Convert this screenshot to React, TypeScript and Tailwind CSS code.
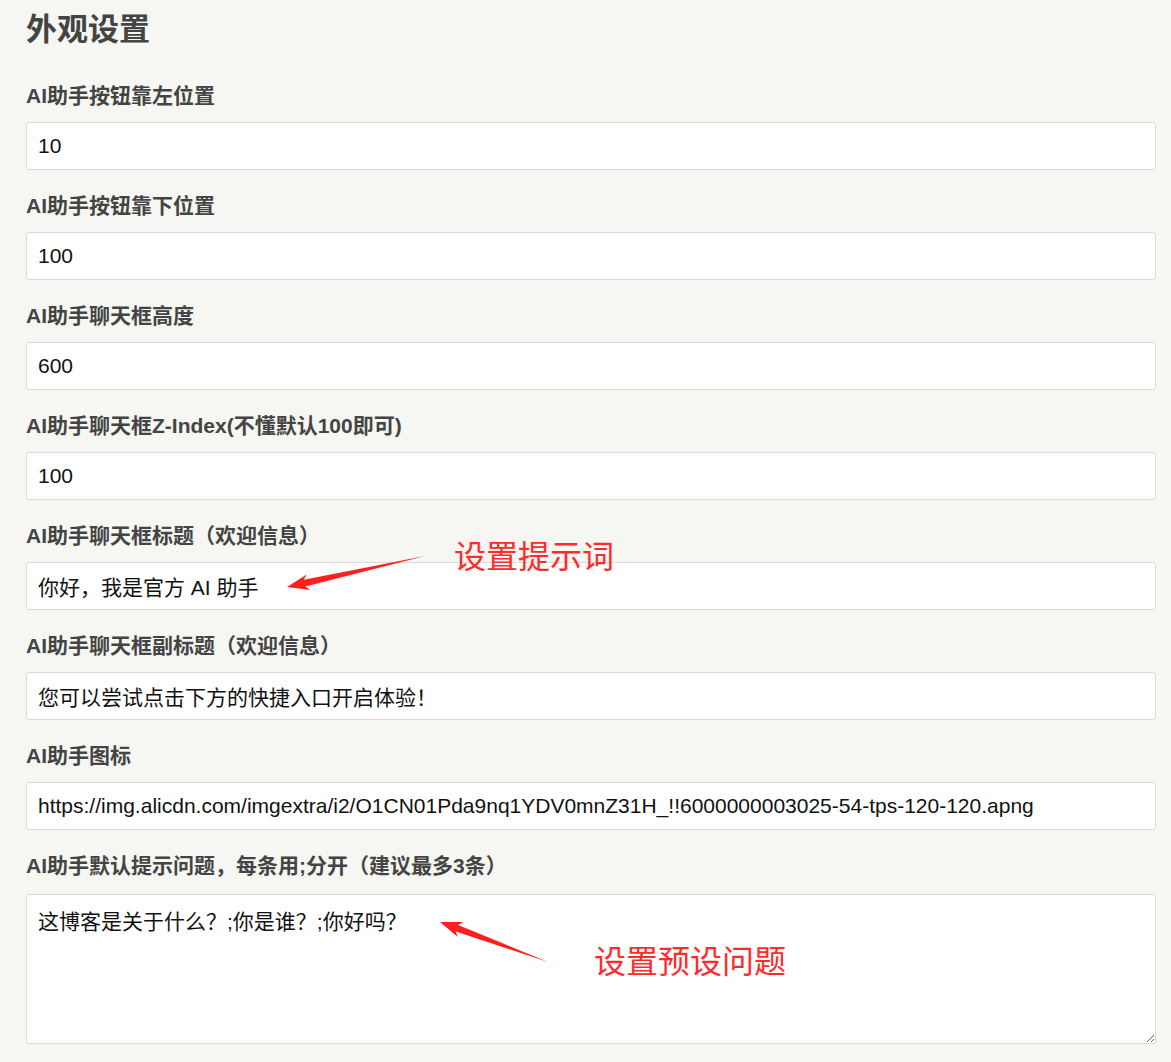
import React from 'react';

const font = { fontFamily: '"Liberation Sans", Arial, "Noto Sans CJK SC", sans-serif' };

const fields = [
  { label: 'AI助手按钮靠左位置', value: '10' },
  { label: 'AI助手按钮靠下位置', value: '100' },
  { label: 'AI助手聊天框高度', value: '600' },
  { label: 'AI助手聊天框Z-Index(不懂默认100即可)', value: '100' },
  { label: 'AI助手聊天框标题（欢迎信息）', value: '你好，我是官方 AI 助手' },
  { label: 'AI助手聊天框副标题（欢迎信息）', value: '您可以尝试点击下方的快捷入口开启体验！' },
  {
    label: 'AI助手图标',
    value: 'https://img.alicdn.com/imgextra/i2/O1CN01Pda9nq1YDV0mnZ31H_!!6000000003025-54-tps-120-120.apng',
  },
];

const Label: React.FC<{ children: React.ReactNode }> = ({ children }) => (
  <label className="block text-[21px] leading-[27px] font-bold text-[#444]">{children}</label>
);

export default function App() {
  return (
    <div className="relative min-h-screen bg-[#f6f6f2] px-[26px] pt-[10px] pb-[18px]" style={font}>
      <h2 className="text-[31px] leading-[40px] font-bold text-[#444]">外观设置</h2>

      <div className="mt-[32px] flex flex-col gap-[22px]">
        {fields.map((f) => (
          <div key={f.label}>
            <Label>{f.label}</Label>
            <input
              type="text"
              defaultValue={f.value}
              className="mt-[13px] block w-[1130px] h-[48px] px-[11px] bg-white border border-[#d9d9d5] rounded-[3px] text-[21px] text-[#111] outline-none"
            />
          </div>
        ))}
        <div>
          <Label>AI助手默认提示问题，每条用;分开（建议最多3条）</Label>
          <textarea
            defaultValue="这博客是关于什么？;你是谁？;你好吗？"
            className="mt-[15px] block w-[1130px] h-[150px] px-[11px] py-[12px] bg-white border border-[#d9d9d5] rounded-[3px] text-[21px] leading-[30px] text-[#111] outline-none"
          />
        </div>
      </div>

      {/* annotations */}
      <div
        className="absolute left-[454px] top-[533px] text-[32px] leading-[42px] text-[#ff2a2a]"
        style={{ fontFamily: '"Noto Sans CJK SC", sans-serif', fontWeight: 400 }}
      >
        设置提示词
      </div>
      <div
        className="absolute left-[594px] top-[938px] text-[32px] leading-[42px] text-[#ff2a2a]"
        style={{ fontFamily: '"Noto Sans CJK SC", sans-serif', fontWeight: 400 }}
      >
        设置预设问题
      </div>
      <svg className="absolute left-0 top-0 pointer-events-none" width="1171" height="1062">
        <polygon
          fill="#ff1f1f"
          points="287,587 310.3,590 305.4,586.5 425,556 303.8,579.7 306.7,574.4"
        />
        <polygon
          fill="#ff1f1f"
          points="440,922 457.8,937.1 455.7,931.5 548,962 458.1,924.9 463.4,922.1"
        />
      </svg>
    </div>
  );
}
